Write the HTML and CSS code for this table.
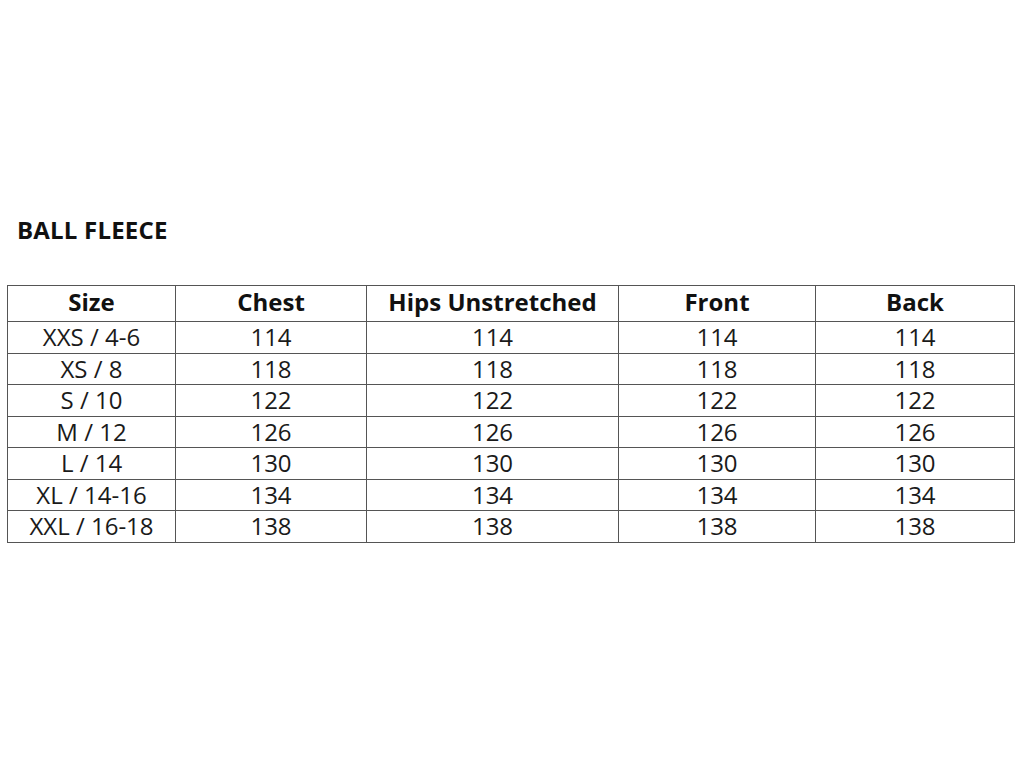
FILE: index.html
```html
<!DOCTYPE html>
<html>
<head>
<meta charset="utf-8">
<link rel="stylesheet" href="styles.css">
</head>
<body>
<div class="page">
  <h2 class="title">BALL FLEECE</h2>
  <table class="sizes">
    <colgroup>
      <col class="c1"><col class="c2"><col class="c3"><col class="c4"><col class="c5">
    </colgroup>
    <thead>
      <tr><th>Size</th><th>Chest</th><th>Hips Unstretched</th><th>Front</th><th>Back</th></tr>
    </thead>
    <tbody>
      <tr><td>XXS / 4-6</td><td>114</td><td>114</td><td>114</td><td>114</td></tr>
      <tr><td>XS / 8</td><td>118</td><td>118</td><td>118</td><td>118</td></tr>
      <tr><td>S / 10</td><td>122</td><td>122</td><td>122</td><td>122</td></tr>
      <tr><td>M / 12</td><td>126</td><td>126</td><td>126</td><td>126</td></tr>
      <tr><td>L / 14</td><td>130</td><td>130</td><td>130</td><td>130</td></tr>
      <tr><td>XL / 14-16</td><td>134</td><td>134</td><td>134</td><td>134</td></tr>
      <tr><td>XXL / 16-18</td><td>138</td><td>138</td><td>138</td><td>138</td></tr>
    </tbody>
  </table>
</div>
</body>
</html>
```
FILE: styles.css
```css
html, body {
  margin: 0;
  padding: 0;
  background: #fff;
}
body {
  font-family: "Open Sans", "Liberation Sans", sans-serif;
  color: #111;
}
.page {
  padding: 215px 10px 0 7px;
}
.title {
  margin: 0 0 0 10px;
  font-size: 24px;
  font-weight: 700;
  line-height: 30px;
  letter-spacing: 0.2px;
  color: #111;
}
.sizes {
  margin-top: 40px;
  border-collapse: collapse;
  width: 1007px;
  table-layout: fixed;
}
.c1 { width: 168px; }
.c2 { width: 191px; }
.c3 { width: 252px; }
.c4 { width: 197px; }
.c5 { width: 199px; }
.sizes th, .sizes td {
  border: 1px solid #555;
  padding: 0;
  text-align: center;
  overflow: hidden;
  white-space: nowrap;
}
.sizes th {
  font-size: 24px;
  font-weight: 700;
  height: 32px;
  line-height: 32px;
  padding-bottom: 3px;
}
.sizes td {
  font-size: 24px;
  font-weight: 400;
  height: 30.5px;
  line-height: 30.5px;
  color: #1a1a1a;
}
```
